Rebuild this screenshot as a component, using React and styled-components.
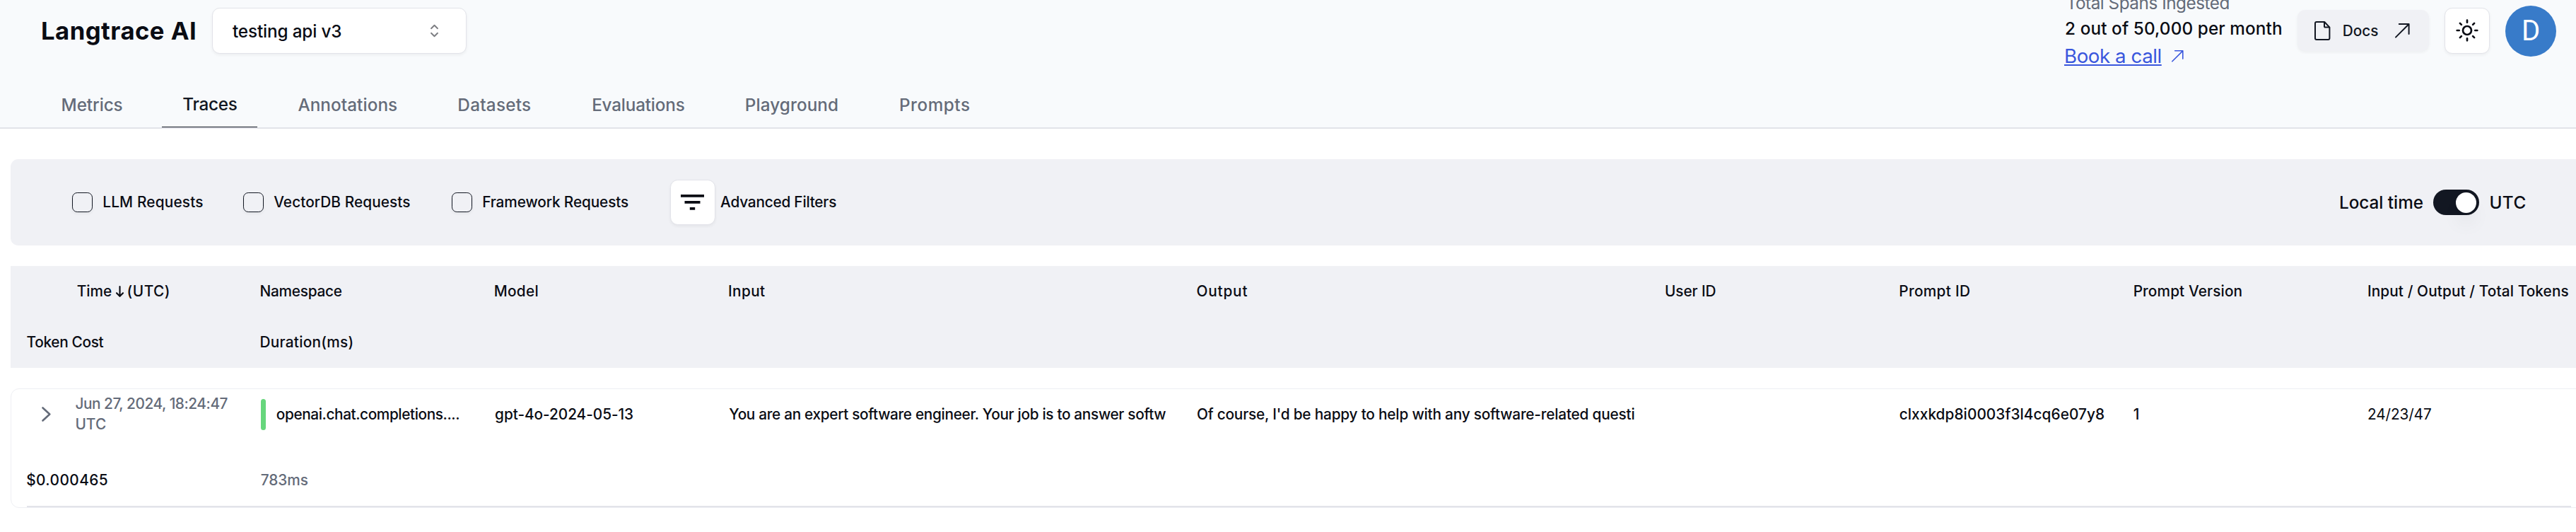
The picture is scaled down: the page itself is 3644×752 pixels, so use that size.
import React from "react";
import styled, { createGlobalStyle } from "styled-components";

const color = {
  ink: "#0a0c14",
  primary: "#121722",
  muted: "#646b79",
  line: "#e2e3e9",
  panel: "#f0f1f5",
  header: "#f8fafc",
  link: "#3a57dd",
};

const GlobalStyle = createGlobalStyle`
  *, *::before, *::after { box-sizing: border-box; }
  body {
    margin: 0;
    background: #fff;
    color: ${color.ink};
    font-family: Inter, "Liberation Sans", sans-serif;
    overflow: hidden;
  }
  svg { display: block; flex: none; overflow: visible; }
`;

const Page = styled.div`
  width: 100%;
  height: 752px;
  overflow: hidden;
`;

/* Text styles */
const Label = styled.span`
  flex: none;
  display: block;
  font-size: 20.8px;
  line-height: 29px;
  font-weight: ${(p) => p.$weight || 500};
  letter-spacing: ${(p) => p.$track || 0}px;
  color: ${(p) => (p.$muted ? color.muted : "inherit")};
  white-space: nowrap;
`;

const BodyText = styled(Label)`
  font-size: 24.3px;
  line-height: 30px;
`;

/* Header */
const Header = styled.header`
  height: 182px;
  display: flex;
  flex-direction: column;
  justify-content: space-between;
  background: ${color.header};
  border-bottom: 2px solid ${color.line};
`;

const TopBar = styled.div`
  display: flex;
  align-items: center;
  height: 65px;
  margin-top: 11px;
  padding: 0 28px 0 58px;
`;

const Brand = styled.h1`
  flex: none;
  width: 241.5px;
  margin: 0;
  padding-bottom: 1px;
  font-size: 34.66px;
  line-height: 42px;
  font-weight: 700;
  letter-spacing: 0.48px;
  white-space: nowrap;
`;

const Select = styled.button`
  display: flex;
  align-items: center;
  justify-content: space-between;
  width: 360px;
  height: 65px;
  padding: 0 39px 0 28.5px;
  border: 1.8px solid ${color.line};
  border-radius: 10.8px;
  background: #fff;
  color: inherit;
  font-family: inherit;
  box-shadow: 0 2px 4px rgba(0, 0, 0, 0.05);
`;

const Actions = styled.div`
  display: flex;
  align-items: center;
  gap: 21.6px;
  margin-left: auto;
`;

const Usage = styled.div`
  align-self: flex-start;
  width: 308px;
  margin: -21.5px 0 -20.5px;
`;

const UsageTitle = styled(BodyText)`
  line-height: 36px;
  padding-left: 2.6px;
`;

const UsageValue = styled(BodyText)`
  line-height: 36px;
  padding-left: 1px;
`;

const CallRow = styled.div`
  display: flex;
  align-items: center;
  gap: 14px;
  color: ${color.link};
`;

const CallLink = styled.a`
  font-size: 27.7px;
  line-height: 42px;
  letter-spacing: -0.45px;
  text-decoration: underline;
  text-decoration-thickness: 2px;
  text-underline-offset: 2px;
  white-space: nowrap;
`;

const DocsButton = styled.button`
  display: flex;
  align-items: center;
  width: 186.6px;
  height: 57.6px;
  margin: 0 0 1px;
  padding: 0 28px 0 24.5px;
  border: 0;
  border-radius: 10.8px;
  background: ${color.panel};
  color: ${color.primary};
  font-family: inherit;
  box-shadow: 0 2px 4px rgba(0, 0, 0, 0.05);

  ${Label} { margin: 0 auto 0 17.3px; }
`;

const IconButton = styled.button`
  display: flex;
  align-items: center;
  justify-content: center;
  flex: none;
  width: 64.6px;
  height: 64.8px;
  padding: 0;
  border: 1.8px solid ${color.line};
  border-radius: 10.8px;
  background: #fff;
  color: ${color.ink};
  box-shadow: 0 2px 4px rgba(0, 0, 0, 0.05);
`;

const Avatar = styled.div`
  display: flex;
  align-items: center;
  justify-content: center;
  width: 72px;
  height: 72px;
  border-radius: 50%;
  background: #387bc9;
  color: #fff;
  font: 400 40px Roboto, sans-serif;
`;

const Tabs = styled.nav`
  display: flex;
  gap: 28.8px;
  height: 56px;
  padding-left: 57.8px;
`;

const Tab = styled.a`
  flex: none;
  width: ${(p) => p.$width}px;
  height: 56px;
  padding: ${(p) => (p.$active ? 8 : 9)}px 0 0 28.8px;
  border-bottom: ${(p) => (p.$active ? `1px solid ${color.primary}` : 0)};
  color: ${(p) => (p.$active ? color.primary : color.muted)};
`;

/* Filters */
const Filters = styled.section`
  display: flex;
  align-items: center;
  height: 122px;
  margin: 43px 0 0 15px;
  padding: 0 72.6px 0 87px;
  border-radius: 10.8px 0 0 10.8px;
  background: ${color.panel};
`;

const FilterItem = styled.div`
  display: flex;
  align-items: center;
  gap: ${(p) => p.$gap || 14.4}px;
  width: ${(p) => p.$width}px;

  ${Label} { padding-bottom: 1px; }
`;

const Checkbox = styled.span`
  flex: none;
  width: 28.8px;
  height: 28.8px;
  border: 1.8px solid ${color.primary};
  border-radius: 7.2px;
  box-shadow: 0 2px 4px rgba(0, 0, 0, 0.06);
`;

const TimeZone = styled.div`
  display: flex;
  align-items: center;
  gap: 14.4px;
  margin-left: auto;
`;

const ZoneName = styled(BodyText)`
  width: ${(p) => p.$width}px;
`;

const Switch = styled.span`
  display: flex;
  justify-content: flex-end;
  align-items: center;
  width: 65px;
  height: 36px;
  padding-right: 3.8px;
  border-radius: 18px;
  background: ${color.primary};
`;

const Thumb = styled.span`
  width: 29px;
  height: 29px;
  border-radius: 50%;
  background: #fff;
  box-shadow: 0 18px 27px -5px rgba(0, 0, 0, 0.1), 0 7px 11px -7px rgba(0, 0, 0, 0.1);
`;

/* Table */
const Grid = styled.div`
  display: grid;
  grid-template-columns: repeat(11, 1fr);
  grid-template-rows: ${(p) => p.$rows};
  gap: 43px 43.2px;
  align-items: center;
  width: 3600.8px;
`;

const TableHead = styled.div`
  height: 144px;
  margin: 29px 0 0 15px;
  padding: 21px 0 0 21.2px;
  background: ${color.panel};
`;

const Cell = styled.div`
  grid-column: span ${(p) => p.$span || 1};
  display: flex;
  align-items: center;
  min-width: 0;
  overflow: ${(p) => (p.$clip ? "hidden" : "visible")};
  padding-left: ${(p) => p.$indent || 0}px;
`;

const TimeHead = styled(Cell)`
  gap: 5.5px;

  ${Label}:first-child { width: 49.8px; }
  ${Label}:last-child { margin-left: -1px; }
`;

const TraceCard = styled.div`
  width: 3658px;
  height: 169px;
  margin: 29px 0 0 15px;
  padding-left: 20.2px;
  border: 1px solid #eeeff3;
  border-radius: 12px;
`;

const TimeCell = styled(Cell)`
  gap: 34.6px;
`;

const DateText = styled.div`
  padding-bottom: 1px;
`;

const StatusBar = styled.span`
  flex: none;
  width: 7.2px;
  height: 44px;
  margin: 1px 14.8px 0 1.4px;
  border-radius: 4px;
  background: #66d67c;
`;

const Divider = styled.div`
  width: 3598.6px;
  height: 2px;
  margin: 22px 0 0 2px;
  background: ${color.line};
`;

const ArrowUpRight = ({ size, weight = 2 }) => (
  <svg width={size} height={size} viewBox="0 0 20.6 20.6" fill="none" stroke="currentColor" strokeWidth={weight} strokeLinecap="round" strokeLinejoin="round">
    <path d="M1 19.6 19.6 1M5.8 1h13.8v14" />
  </svg>
);

const FileIcon = () => (
  <svg width="22.4" height="27" viewBox="0 0 22.4 27" fill="none" stroke="currentColor" strokeWidth="2" strokeLinejoin="round">
    <path d="M14.2 1H3a2 2 0 0 0-2 2v21a2 2 0 0 0 2 2h16.4a2 2 0 0 0 2-2V8.6Z" />
    <path d="M14 1v6.4a1.2 1.2 0 0 0 1.2 1.2h6.2" />
  </svg>
);

const SunIcon = () => (
  <svg width="32" height="32" viewBox="-16 -16 32 32" fill="none" stroke="currentColor" strokeWidth="2.7" strokeLinecap="round">
    <circle r="6" />
    <path d="M0-14.3v3M0 11.3v3M-14.3 0h3M11.3 0h3M-10.1-10.1l2 2M8.1 8.1l2 2M-10.1 10.1l2-2M8.1-8.1l2-2" />
  </svg>
);

const SortIcon = () => (
  <svg width="11" height="17" viewBox="0 0 11 17" fill="none" stroke="#7c7d82" strokeWidth="1.9" strokeLinecap="round" strokeLinejoin="round">
    <path d="M1 5.2 5.5.8 10 5.2M1 11.8l4.5 4.4 4.5-4.4" />
  </svg>
);

const FilterIcon = () => (
  <svg width="33" height="22" viewBox="0 0 33 22" fill="currentColor">
    <path d="M0 0h33v3.7H0zM5.5 9h22v3.7h-22zM12.8 18h7.4v3.7h-7.4z" />
  </svg>
);

const ArrowDown = () => (
  <svg width="11" height="16" viewBox="0 0 11 16" fill="none" stroke="currentColor" strokeWidth="2.1" strokeLinecap="round" strokeLinejoin="round">
    <path d="M5.5 1v13.6M1 10.2l4.5 4.6 4.5-4.6" />
  </svg>
);

const ChevronRight = () => (
  <svg width="13" height="21" viewBox="0 0 13 21" fill="none" stroke={color.muted} strokeWidth="2.6" strokeLinecap="round" strokeLinejoin="round">
    <path d="m1.5 1.5 9.8 9-9.8 9" />
  </svg>
);

const tabs = [
  { name: "Metrics", width: 142.9, track: -0.09 },
  { name: "Traces", width: 134.3, track: -0.29, active: true },
  { name: "Annotations", width: 197.2, track: 0.07 },
  { name: "Datasets", width: 161, track: 0.26 },
  { name: "Evaluations", width: 187.9, track: -0.2 },
  { name: "Playground", width: 189.3, track: 0.07 },
  { name: "Prompts", width: 154, track: 0.52 },
];

const requestFilters = [
  { name: "LLM Requests", width: 242, track: 0.18 },
  { name: "VectorDB Requests", width: 295, track: 0.07 },
  { name: "Framework Requests", width: 308.5, track: -0.12 },
];

const columns = [
  { name: "Namespace", track: -0.24 },
  { name: "Model", track: 0.28 },
  { name: "Input", track: 0.37, span: 2 },
  { name: "Output", track: 0.79, span: 2 },
  { name: "User ID", track: -0.1 },
  { name: "Prompt ID", track: 0.31 },
  { name: "Prompt Version", track: 0.12 },
  { name: "Input / Output / Total Tokens", track: 0.1 },
  { name: "Token Cost", track: -0.33, indent: 1.4 },
  { name: "Duration(ms)", track: 0.27 },
];

const values = [
  { text: "gpt-4o-2024-05-13", track: -0.05, indent: 1.4 },
  { text: "You are an expert software engineer. Your job is to answer softw", track: -0.33, indent: 1.3, span: 2, clip: true },
  { text: "Of course, I'd be happy to help with any software-related questi", track: -0.2, indent: 0.4, span: 2, clip: true },
  { text: "" },
  { text: "clxxkdp8i0003f3l4cq6e07y8", track: 0.06, indent: 0.4 },
  { text: "1" },
  { text: "24/23/47", track: -0.1, weight: 400 },
  { text: "$0.000465", track: 0.44, indent: 1 },
  { text: "783ms", track: -0.09, indent: 1.4, muted: true },
];

export default function App() {
  return (
    <Page>
      <GlobalStyle />
      <Header>
        <TopBar>
          <Brand>Langtrace AI</Brand>
          <Select>
            <BodyText $track={-0.16}>testing api v3</BodyText>
            <SortIcon />
          </Select>
          <Actions>
            <Usage>
              <UsageTitle $muted $weight={400} $track={-0.47}>Total Spans Ingested</UsageTitle>
              <UsageValue $track={0.1}>2 out of 50,000 per month</UsageValue>
              <CallRow>
                <CallLink>Book a call</CallLink>
                <ArrowUpRight size={16.6} />
              </CallRow>
            </Usage>
            <DocsButton>
              <FileIcon />
              <Label $track={-0.05}>Docs</Label>
              <ArrowUpRight size={20.6} />
            </DocsButton>
            <IconButton aria-label="Theme">
              <SunIcon />
            </IconButton>
            <Avatar>D</Avatar>
          </Actions>
        </TopBar>
        <Tabs>
          {tabs.map((t) => (
            <Tab key={t.name} $width={t.width} $active={t.active}>
              <BodyText $track={t.track}>{t.name}</BodyText>
            </Tab>
          ))}
        </Tabs>
      </Header>

      <Filters>
        {requestFilters.map((f) => (
          <FilterItem key={f.name} $width={f.width}>
            <Checkbox />
            <Label $track={f.track}>{f.name}</Label>
          </FilterItem>
        ))}
        <FilterItem $gap={7}>
          <IconButton aria-label="Filters">
            <FilterIcon />
          </IconButton>
          <Label $track={-0.23}>Advanced Filters</Label>
        </FilterItem>
        <TimeZone>
          <ZoneName $width={118.6} $track={-0.04}>Local time</ZoneName>
          <Switch>
            <Thumb />
          </Switch>
          <ZoneName $width={50} $track={0.48}>UTC</ZoneName>
        </TimeZone>
      </Filters>

      <TableHead>
        <Grid $rows="29px 29px">
          <TimeHead $indent={72.6}>
            <Label $track={-0.02}>Time</Label>
            <ArrowDown />
            <Label $track={0.5}>(UTC)</Label>
          </TimeHead>
          {columns.map((c) => (
            <Cell key={c.name} $span={c.span} $indent={c.indent}>
              <Label $track={c.track}>{c.name}</Label>
            </Cell>
          ))}
        </Grid>
      </TableHead>

      <TraceCard>
        <Grid $rows="71px 29px">
          <TimeCell $indent={22.6}>
            <ChevronRight />
            <DateText>
              <Label $muted $track={-0.45}>Jun 27, 2024, 18:24:47</Label>
              <Label $muted $track={0.09}>UTC</Label>
            </DateText>
          </TimeCell>
          <Cell>
            <StatusBar />
            <Label $track={-0.41}>openai.chat.completions....</Label>
          </Cell>
          {values.map((v, i) => (
            <Cell key={i} $span={v.span} $indent={v.indent} $clip={v.clip}>
              <Label $track={v.track} $weight={v.weight} $muted={v.muted}>{v.text}</Label>
            </Cell>
          ))}
        </Grid>
        <Divider />
      </TraceCard>
    </Page>
  );
}
